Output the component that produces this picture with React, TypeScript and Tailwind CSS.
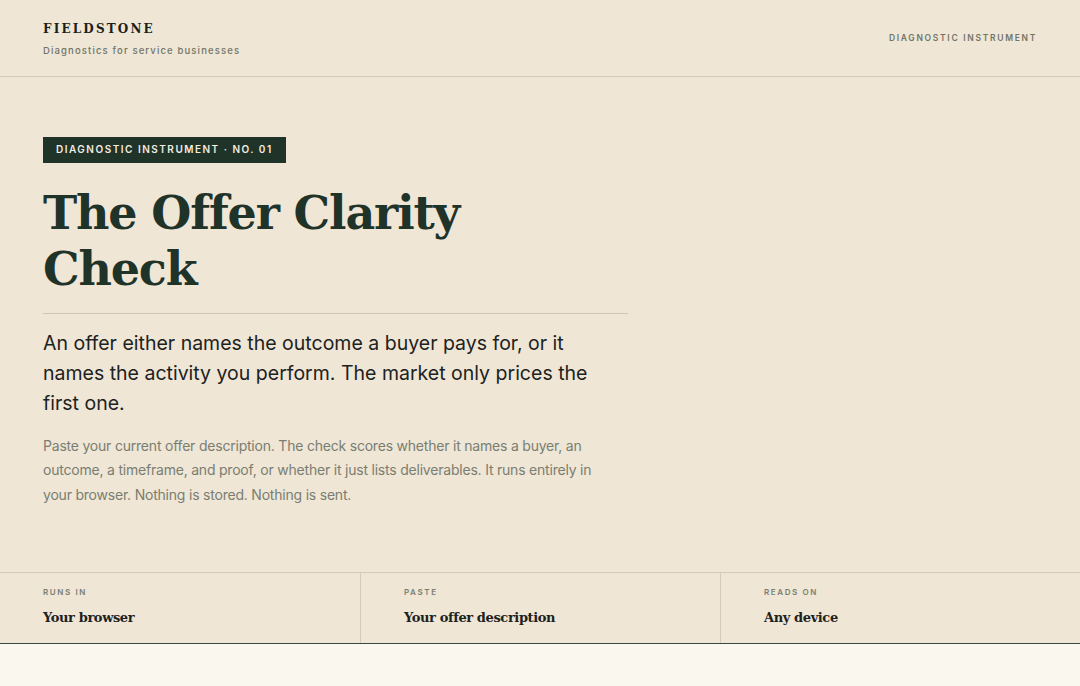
import React from 'react';

const serif = { fontFamily: '"DejaVu Serif", "Liberation Serif", serif' };

const stats = [
  { label: 'Runs in', value: 'Your browser' },
  { label: 'Paste', value: 'Your offer description' },
  { label: 'Reads on', value: 'Any device' },
];

export default function App() {
  return (
    <div
      className="min-h-[686px] bg-[#faf7ef] text-[#1f3329]"
      style={{ fontFamily: 'Inter, "Noto Sans", sans-serif' }}
    >
      <div className="bg-[#efe6d6]">
        {/* Header */}
        <header className="flex h-[77px] items-center justify-between border-b border-[#d3cbbb] px-[43px] pt-[3px]">
          <div>
            <div className="text-[12px] font-bold tracking-[0.18em] text-[#1c1f1b]" style={serif}>
              FIELDSTONE
            </div>
            <div className="mt-[6px] text-[9.5px] font-medium tracking-[0.12em] text-[#6f7567]">
              Diagnostics for service businesses
            </div>
          </div>
          <div className="-mt-[3px] text-[8.5px] font-semibold tracking-[0.2em] text-[#6f7567]">
            DIAGNOSTIC INSTRUMENT
          </div>
        </header>

        {/* Hero */}
        <section className="px-[43px] pb-[65px] pt-[58px]">
          <div className="max-w-[585px]">
            <span className="inline-flex h-[26px] items-center bg-[#1f3329] px-[13px] text-[10px] font-semibold tracking-[0.15em] text-[#f3ece0]">
              DIAGNOSTIC INSTRUMENT · NO. 01
            </span>
            <h1
              className="mt-[22px] text-[46px] font-bold leading-[56px] tracking-[-0.025em] text-[#1f3329]"
              style={serif}
            >
              The Offer Clarity
              <br />
              Check
            </h1>
            <div className="mt-[16px] border-t border-[#cfc6b5]" />
            <p className="mt-[14px] text-[19.5px] leading-[30px] text-[#1c221d]">
              An offer either names the outcome a buyer pays for, or it names the activity you perform. The market only
              prices the first one.
            </p>
            <p className="mt-[16px] max-w-[560px] text-[14px] leading-[24.5px] tracking-[-0.015em] text-[#7a7e71]">
              Paste your current offer description. The check scores whether it names a buyer, an outcome, a timeframe,
              and proof, or whether it just lists deliverables. It runs entirely in your browser. Nothing is stored.
              Nothing is sent.
            </p>
          </div>
        </section>

        {/* Stat strip */}
        <div className="grid grid-cols-3 border-y border-[#d3cbbb] border-b-[#3a4a40]">
          {stats.map((s, i) => (
            <div key={s.label} className={`h-[70px] px-[43px] pt-[13px] ${i > 0 ? 'border-l border-[#d3cbbb]' : ''}`}>
              <div className="text-[8px] font-semibold uppercase tracking-[0.2em] text-[#7a7e71]">{s.label}</div>
              <div className="mt-[10px] text-[13px] font-bold tracking-[-0.03em] text-[#1c221d]" style={serif}>
                {s.value}
              </div>
            </div>
          ))}
        </div>
      </div>
    </div>
  );
}
